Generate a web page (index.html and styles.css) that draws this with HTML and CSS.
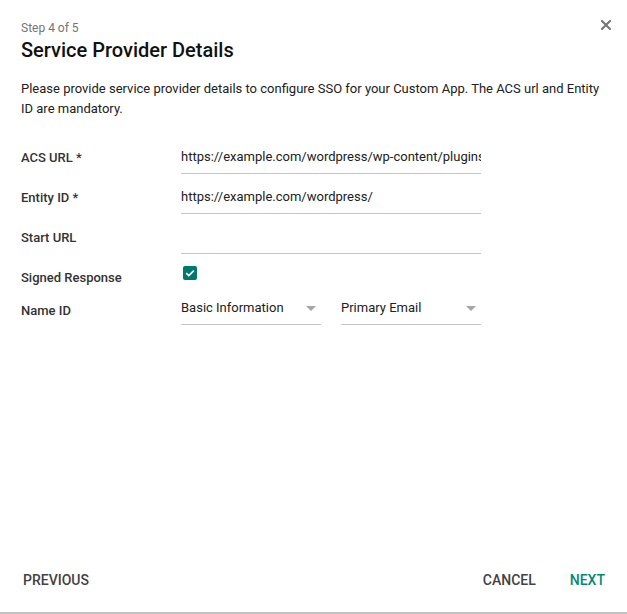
FILE: index.html
```html
<!DOCTYPE html>
<html lang="en">
<head>
    <meta charset="UTF-8">
    <meta name="viewport" content="width=device-width, initial-scale=1.0">
    <title>Service Provider Details</title>
    <link rel="stylesheet" href="styles.css">
</head>
<body>
    <div class="dialog">
        <div class="dialog-header">
            <div class="step">Step 4 of 5</div>
            <h1 class="title">Service Provider Details</h1>
            <button class="close-btn" aria-label="Close">
                <svg width="10" height="10" viewBox="0 0 10 10">
                    <path d="M1 1 L9 9 M9 1 L1 9" stroke="#757575" stroke-width="2" stroke-linecap="square"/>
                </svg>
            </button>
        </div>

        <p class="description">
            Please provide service provider details to configure SSO for your Custom App. The ACS url and Entity ID are mandatory.
        </p>

        <div class="form">
            <div class="field-row">
                <label class="field-label">ACS URL *</label>
                <input class="text-input" type="text" value="https://example.com/wordpress/wp-content/plugins/miniorange-saml-20-single-sign-on/">
            </div>
            <div class="field-row">
                <label class="field-label">Entity ID *</label>
                <input class="text-input" type="text" value="https://example.com/wordpress/">
            </div>
            <div class="field-row">
                <label class="field-label">Start URL</label>
                <input class="text-input" type="text" value="">
            </div>
            <div class="field-row">
                <label class="field-label">Signed Response</label>
                <span class="checkbox">
                    <svg width="14" height="14" viewBox="0 0 14 14">
                        <path d="M3.2 7.2 L5.8 9.6 L10.8 4.6" fill="none" stroke="#fff" stroke-width="1.6"/>
                    </svg>
                </span>
            </div>
            <div class="field-row name-row">
                <label class="field-label">Name ID</label>
                <div class="selects">
                    <div class="select">
                        <span>Basic Information</span>
                        <span class="caret"></span>
                    </div>
                    <div class="select">
                        <span>Primary Email</span>
                        <span class="caret"></span>
                    </div>
                </div>
            </div>
        </div>

        <div class="dialog-footer">
            <button class="btn">Previous</button>
            <div class="footer-right">
                <button class="btn">Cancel</button>
                <button class="btn btn-primary">Next</button>
            </div>
        </div>
    </div>
</body>
</html>
```

FILE: styles.css
```css
* {
    margin: 0;
    padding: 0;
    box-sizing: border-box;
}

body {
    font-family: Roboto, 'Liberation Sans', sans-serif;
    background: white;
    color: #212121;
}

.dialog {
    height: 100vh;
    display: flex;
    flex-direction: column;
    border-bottom: 2px solid #c2c2c2;
}

.dialog-header {
    position: relative;
    padding: 20px 21px 0;
}

.step {
    font-size: 12px;
    line-height: 16px;
    color: #757575;
}

.title {
    font-size: 20px;
    line-height: 28px;
    font-weight: 500;
    color: #111;
}

.close-btn {
    position: absolute;
    top: 20px;
    right: 16px;
    width: 10px;
    height: 10px;
    border: none;
    background: none;
    cursor: pointer;
    display: flex;
}

.description {
    margin: 15px 21px 0;
    font-size: 13px;
    line-height: 20px;
    color: #212121;
}

.form {
    margin: 21px 21px 0;
    display: flex;
    flex-direction: column;
    gap: 6px;
}

.field-row {
    display: flex;
    align-items: center;
    height: 34px;
}

.field-label {
    width: 160px;
    flex-shrink: 0;
    font-size: 13px;
    font-weight: 500;
    color: #333;
}

.text-input {
    width: 300px;
    height: 34px;
    border: none;
    border-bottom: 1px solid #c4c4c4;
    font-family: inherit;
    font-size: 13px;
    color: #212121;
    padding: 0 0 1px;
    outline: none;
    background: transparent;
}

.checkbox {
    width: 14px;
    height: 14px;
    margin: 0 0 8px 2px;
    border-radius: 2px;
    background: #00796b;
    display: flex;
}

.name-row {
    height: 25px;
    align-items: flex-start;
}

.name-row .field-label {
    padding-top: 3px;
    line-height: 16px;
}

.selects {
    display: flex;
    gap: 20px;
}

.select {
    width: 140px;
    height: 25px;
    display: flex;
    justify-content: space-between;
    align-items: flex-start;
    border-bottom: 1px solid #c4c4c4;
    font-size: 13px;
    line-height: 16px;
    color: #212121;
}

.caret {
    width: 0;
    height: 0;
    margin: 6px 5px 0 0;
    border-left: 5px solid transparent;
    border-right: 5px solid transparent;
    border-top: 5px solid #a6a6a6;
}

.dialog-footer {
    margin-top: auto;
    padding: 0 14px 14px 15px;
    display: flex;
    justify-content: space-between;
    align-items: center;
}

.footer-right {
    display: flex;
    gap: 18px;
}

.btn {
    height: 36px;
    padding: 0 8px;
    border: none;
    background: none;
    font-family: inherit;
    font-size: 14px;
    font-weight: 500;
    text-transform: uppercase;
    color: #424242;
    cursor: pointer;
}

.btn-primary {
    color: #00897b;
}
```
